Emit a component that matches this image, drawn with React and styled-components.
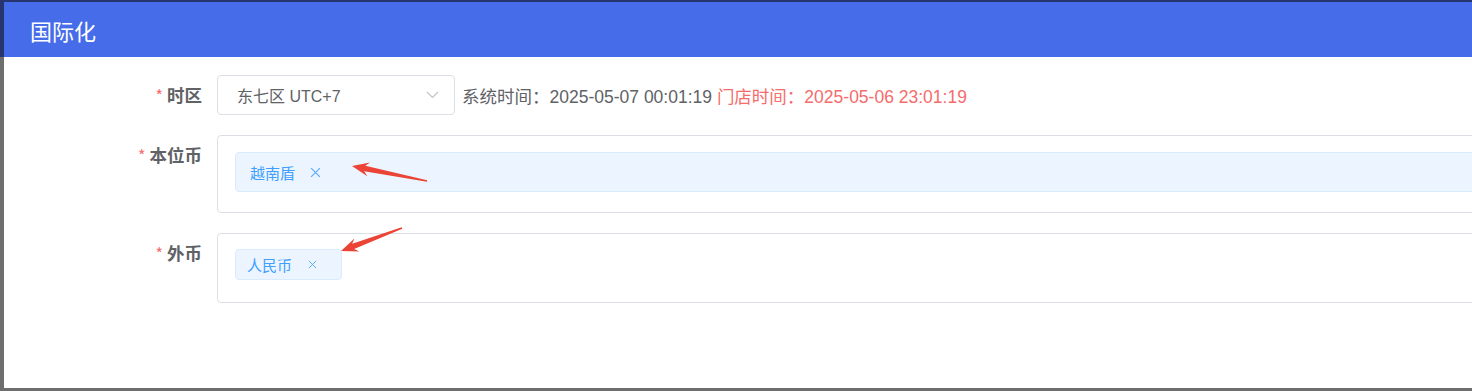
import React from 'react'
import styled, { createGlobalStyle } from 'styled-components'

const GlobalStyle = createGlobalStyle`
  html, body {
    margin: 0;
    padding: 0;
    background: #6e6e6e;
  }
  * { box-sizing: border-box; }
`

const FONT = `"Liberation Sans", "Noto Sans CJK SC", sans-serif`

const Backdrop = styled.div`
  width: 1472px;
  height: 391px;
  padding: 2px 0 3px 4px;
  overflow: hidden;
  background: linear-gradient(#26356f 0 57px, #6e6e6e 57px);
  font-family: ${FONT};
`

const Dialog = styled.div`
  position: relative;
  width: 1520px;
  height: 386px;
  background: #fff;
  display: flex;
  flex-direction: column;
`

const Header = styled.div`
  height: 55px;
  flex-shrink: 0;
  background: #466cea;
  display: flex;
  align-items: center;
  padding-left: 26px;
`

const Title = styled.span`
  color: #fff;
  font-size: 22px;
  font-family: "Noto Sans CJK SC", sans-serif;
`

const Form = styled.div`
  padding-top: 18px;
  display: flex;
  flex-direction: column;
  gap: 20px;
`

const Row = styled.div`
  display: flex;
  align-items: flex-start;
`

const Label = styled.label`
  width: 213px;
  flex-shrink: 0;
  padding-right: 15px;
  text-align: right;
  line-height: 40px;
  font-size: 17.5px;
  font-weight: bold;
  color: #606266;
  font-family: "Noto Sans CJK SC", sans-serif;
`

const Star = styled.span`
  color: #f56c6c;
  font-weight: normal;
  font-size: 16px;
  margin-right: 4px;
`

const Inline = styled.div`
  display: flex;
  align-items: center;
  height: 40px;
  gap: 7px;
`

const Select = styled.div`
  width: 238px;
  height: 40px;
  border: 1px solid #dcdfe6;
  border-radius: 4px;
  padding: 0 15px 0 19px;
  display: flex;
  align-items: center;
  justify-content: space-between;
  font-size: 16px;
  color: #606266;
`

const Time = styled.span`
  font-size: 17.5px;
  color: ${p => (p.$danger ? '#f56c6c' : '#606266')};
  white-space: pre;
`

const TagBox = styled.div`
  flex: 1;
  border: 1px solid #dcdfe6;
  border-radius: 4px;
  padding: ${p => p.$pad};
  display: flex;
`

const Tag = styled.div`
  display: flex;
  align-items: center;
  flex: ${p => (p.$block ? 1 : '0 0 auto')};
  height: ${p => p.$h}px;
  padding: 0 ${p => p.$pr}px 0 ${p => p.$pl}px;
  gap: ${p => p.$gap}px;
  background: #ecf5ff;
  border: 1px solid #d9ecff;
  border-radius: 4px;
  color: #409eff;
  font-size: 15px;
  font-family: "Noto Sans CJK SC", sans-serif;
`

const Overlay = styled.svg`
  position: absolute;
  left: 0;
  top: 0;
  pointer-events: none;
`

const Chevron = () => (
  <svg width="13" height="8" viewBox="0 0 13 8">
    <polyline points="1,1 6.5,6.5 12,1" fill="none" stroke="#c0c4cc" strokeWidth="1.2" />
  </svg>
)

const Close = ({ size }) => (
  <svg width={size} height={size} viewBox="0 0 10 10">
    <path d="M1 1 L9 9 M9 1 L1 9" stroke="#409eff" strokeWidth="1.1" fill="none" opacity="0.85" />
  </svg>
)

const arrowPoints = (tip, tail) => {
  const [tx, ty] = tip
  const [sx, sy] = tail
  const len = Math.hypot(sx - tx, sy - ty)
  const dx = (sx - tx) / len
  const dy = (sy - ty) / len
  const nx = -dy
  const ny = dx
  const hl = 17
  const hw = 7
  const sw = 2.8
  const tw = 0.8
  const p = (along, side, ox = tx, oy = ty) =>
    `${ox + dx * along + nx * side},${oy + dy * along + ny * side}`
  return [
    p(0, 0),
    p(hl, hw),
    p(hl - 4, sw),
    p(0, tw, sx, sy),
    p(0, -tw, sx, sy),
    p(hl - 4, -sw),
    p(hl, -hw),
  ].join(' ')
}

const Arrows = () => (
  <Overlay width="1520" height="386" viewBox="4 2 1520 386">
    <polygon points={arrowPoints([352, 166], [427, 181])} fill="#eb4436" />
    <polygon points={arrowPoints([341, 251], [402, 228])} fill="#eb4436" />
  </Overlay>
)

export default function App() {
  return (
    <>
      <GlobalStyle />
      <Backdrop>
        <Dialog>
          <Header>
            <Title>国际化</Title>
          </Header>
          <Form>
            <Row>
              <Label><Star>*</Star>时区</Label>
              <Inline>
                <Select>
                  <span>东七区 UTC+7</span>
                  <Chevron />
                </Select>
                <span>
                  <Time>系统时间：2025-05-07 00:01:19 </Time>
                  <Time $danger>门店时间：2025-05-06 23:01:19</Time>
                </span>
              </Inline>
            </Row>
            <Row>
              <Label><Star>*</Star>本位币</Label>
              <TagBox $pad="16px 18px 20px 17px">
                <Tag $block $h={40} $pl={14} $pr={0} $gap={15}>
                  越南盾
                  <Close size={11} />
                </Tag>
              </TagBox>
            </Row>
            <Row>
              <Label><Star>*</Star>外币</Label>
              <TagBox $pad="15px 18px 22px 17px">
                <Tag $h={31} $pl={11} $pr={24} $gap={16}>
                  人民币
                  <Close size={9} />
                </Tag>
              </TagBox>
            </Row>
          </Form>
          <Arrows />
        </Dialog>
      </Backdrop>
    </>
  )
}
